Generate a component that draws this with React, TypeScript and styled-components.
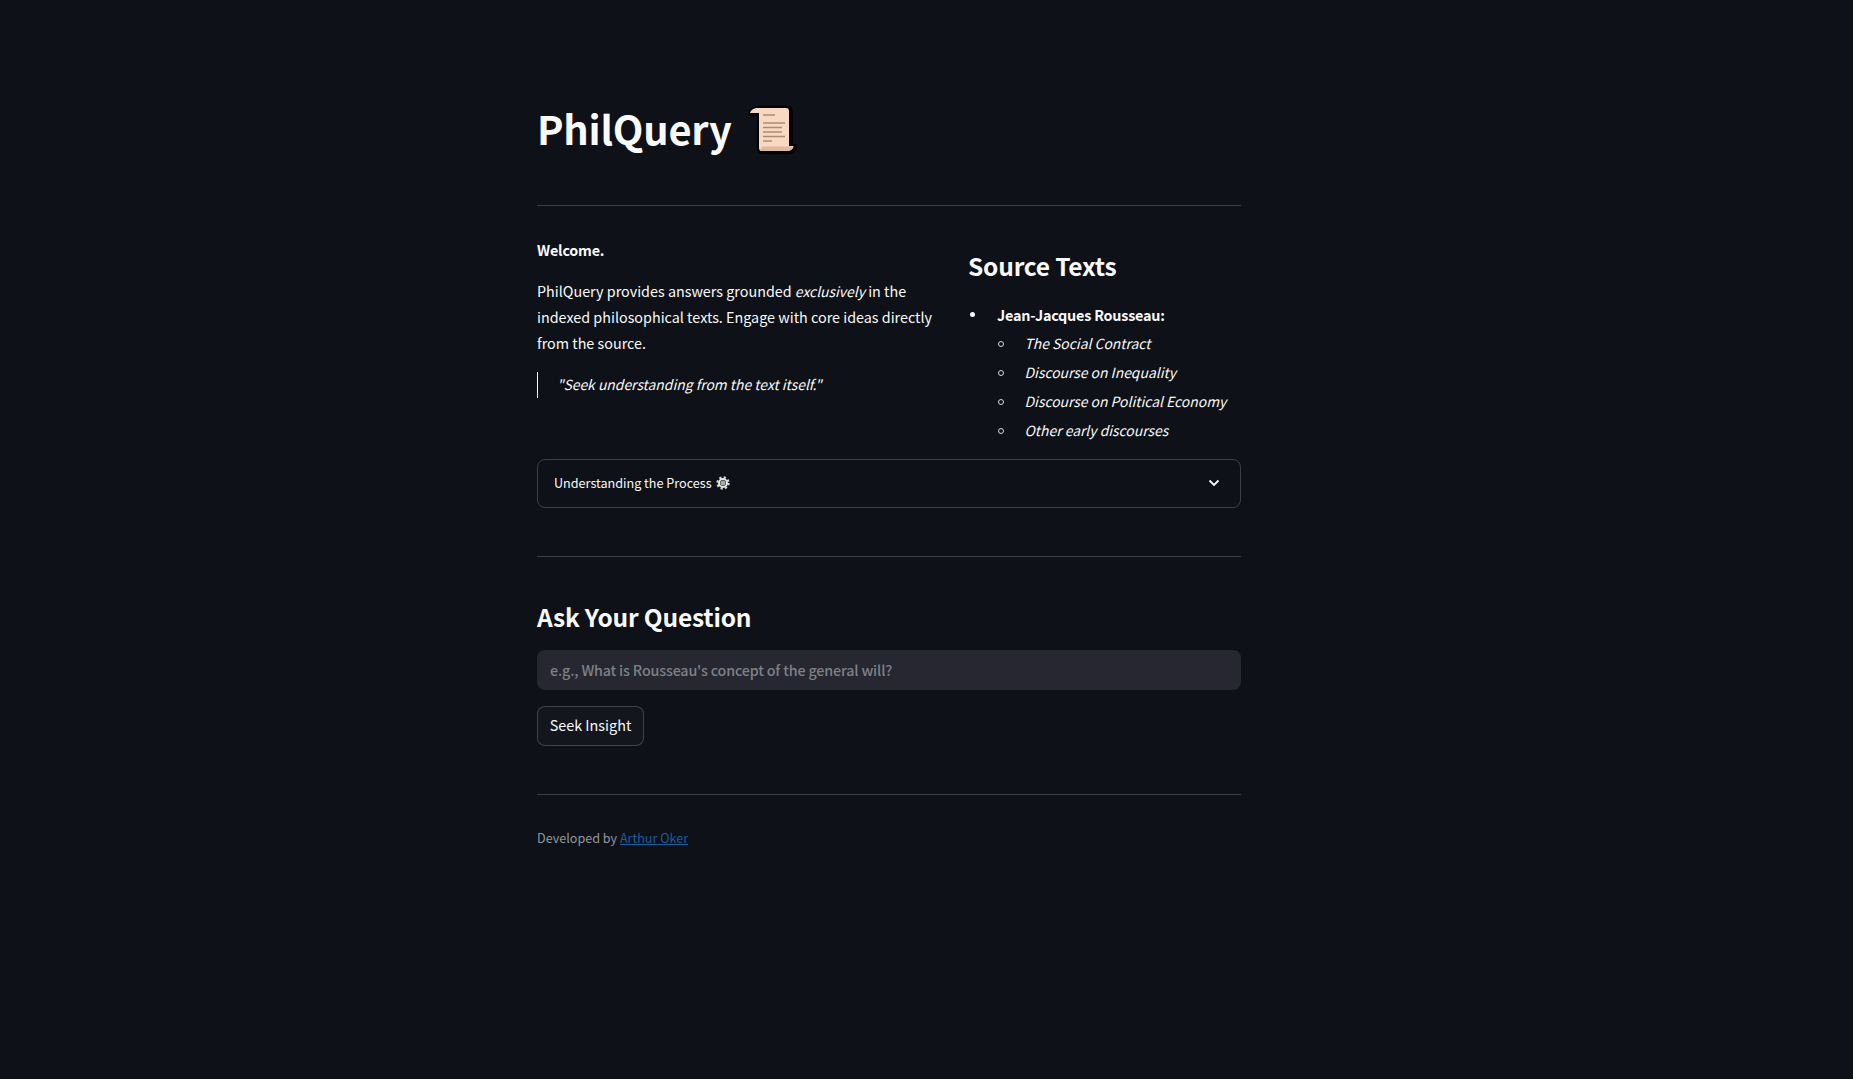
import styled, { createGlobalStyle } from "styled-components";

const GlobalStyle = createGlobalStyle`
  html, body {
    margin: 0;
    padding: 0;
    height: 100%;
    background: #0e1117;
  }
  body {
    color: #fafafa;
    font-family: "Noto Sans CJK JP", "Noto Sans", sans-serif;
    font-size: 14.35px;
    line-height: 26px;
  }
  em {
    font-size: 13.9px;
  }
  strong {
    letter-spacing: -0.2px;
  }
`;

const Page = styled.div`
  width: 704px;
  margin-left: 537px;
  padding-top: 100px;
`;

const TitleRow = styled.div`
  display: flex;
  align-items: center;
  height: 60px;
`;

const Title = styled.h1`
  margin: -5px 0 0;
  font-size: 39.8px;
  line-height: 60px;
  font-weight: 700;
  letter-spacing: -0.2px;
`;

const Divider = styled.hr<{ $top: number }>`
  border: none;
  height: 1px;
  margin: ${(props) => props.$top}px 0 0;
  background: rgba(250, 250, 250, 0.2);
`;

const Columns = styled.div`
  display: grid;
  grid-template-columns: 415px 273px;
  column-gap: 16px;
  margin-top: 31px;
`;

const Para = styled.p`
  margin: 0 0 15px;
`;

const Quote = styled.blockquote`
  margin: 16px 0 0;
  padding: 0 0 2px 19px;
  border-left: 1px solid #fafafa;
  font-size: 13.9px;
  line-height: 24px;
  font-style: italic;
`;

const SideTitle = styled.h2`
  margin: 0;
  padding-top: 9px;
  font-size: 24.5px;
  line-height: 40px;
  font-weight: 600;
  letter-spacing: -0.2px;
`;

const AuthorList = styled.ul`
  margin: 16px 0 0;
  padding-left: 29px;
  list-style: none;
`;

const AuthorItem = styled.li`
  position: relative;
  &::before {
    content: "";
    position: absolute;
    left: -27px;
    top: 10px;
    width: 5px;
    height: 5px;
    border-radius: 50%;
    background: #fafafa;
  }
`;

const BookList = styled.ul`
  margin: 0;
  padding: 1px 0 0 27.5px;
  list-style: none;
`;

const BookItem = styled.li`
  position: relative;
  height: 29px;
  line-height: 29px;
  font-size: 13.9px;
  font-style: italic;
  &::before {
    content: "";
    position: absolute;
    left: -26.5px;
    top: 12px;
    width: 4px;
    height: 4px;
    border: 1px solid #d8d8d8;
    border-radius: 50%;
  }
`;

const Expander = styled.div`
  display: flex;
  align-items: center;
  justify-content: space-between;
  height: 49px;
  box-sizing: border-box;
  margin-top: 14px;
  padding: 0 20px 2px 16px;
  border: 1px solid rgba(250, 250, 250, 0.2);
  border-radius: 8px;
`;

const ExpanderLabel = styled.div`
  display: flex;
  align-items: center;
  gap: 4px;
  font-size: 12.6px;
`;

const SectionTitle = styled.h3`
  margin: 40px 0 0;
  font-size: 24.5px;
  line-height: 40px;
  font-weight: 600;
  letter-spacing: -0.2px;
`;

const QuestionInput = styled.input`
  display: block;
  width: 100%;
  height: 40px;
  box-sizing: border-box;
  margin-top: 13px;
  padding: 0 13px 2px;
  border: none;
  border-radius: 8px;
  background: #262730;
  color: #fafafa;
  font-family: inherit;
  font-size: 14.3px;
  font-weight: 500;
  letter-spacing: -0.16px;
  &::placeholder {
    color: #7f8087;
    opacity: 1;
  }
`;

const SeekButton = styled.button`
  display: block;
  width: 107px;
  height: 40px;
  margin-top: 16px;
  padding: 0 0 3px;
  border: 1px solid rgba(250, 250, 250, 0.2);
  border-radius: 8px;
  background: #13161d;
  color: #fafafa;
  font-family: inherit;
  font-size: 14.4px;
`;

const Footer = styled.p`
  margin: 31px 0 0;
  font-size: 12.6px;
  line-height: 24px;
  color: #94979c;
`;

const FooterLink = styled.a`
  color: #1f5c99;
`;

const ScrollIcon = styled.svg`
  width: 52px;
  height: 52px;
  margin-left: 14px;
  margin-top: -3px;
`;

const GearIcon = () => (
  <svg width="14" height="14" viewBox="0 0 14 14">
    <circle cx="7" cy="7" r="5.6" fill="none" stroke="#d9d9d9" strokeWidth="2.2" strokeDasharray="2.2 2.2" />
    <circle cx="7" cy="7" r="4" fill="none" stroke="#e6e6e6" strokeWidth="2" />
    <circle cx="7" cy="7" r="2.6" fill="#a8a8a8" />
  </svg>
);

const ChevronIcon = () => (
  <svg width="12" height="8" viewBox="0 0 12 8">
    <path d="M1.5 1.5 L6 6 L10.5 1.5" fill="none" stroke="#fafafa" strokeWidth="1.8" />
  </svg>
);

const scrollShape =
  "M4 10 C5 6.5 8 5 12 5 H40 Q43 5 43 8 V43 H47.5 C47 46.5 44 48 41 48 H16 Q13 48 13 45 V10 Z";

const Scroll = () => (
  <ScrollIcon viewBox="0 0 52 52">
    <path
      d={scrollShape}
      transform="translate(1 0.5)"
      fill="#000"
      stroke="#000"
      strokeWidth="5.5"
      strokeLinejoin="round"
    />
    <path d={scrollShape} fill="#f8d8c0" />
    <path d="M14 48 C15 45 16 43.5 18 43.5 H47.5 C47 46.5 44 48 41 48 Z" fill="#dfb99c" />
    <path
      d="M17 12 H29 M17 20 H39 M17 24.5 H36 M17 29 H36 M17 33.5 H39 M17 38 H26"
      stroke="#b08a70"
      strokeWidth="1.3"
    />
  </ScrollIcon>
);

const App = () => {
  return (
    <>
      <GlobalStyle />
      <Page>
        <TitleRow>
          <Title>PhilQuery</Title>
          <Scroll />
        </TitleRow>
        <Divider $top={45} />
        <Columns>
          <div>
            <Para>
              <strong>Welcome.</strong>
            </Para>
            <Para>
              PhilQuery provides answers grounded <em>exclusively</em> in the indexed philosophical
              texts. Engage with core ideas directly from the source.
            </Para>
            <Quote>"Seek understanding from the text itself."</Quote>
          </div>
          <div>
            <SideTitle>Source Texts</SideTitle>
            <AuthorList>
              <AuthorItem>
                <strong>Jean-Jacques Rousseau:</strong>
                <BookList>
                  <BookItem>The Social Contract</BookItem>
                  <BookItem>Discourse on Inequality</BookItem>
                  <BookItem>Discourse on Political Economy</BookItem>
                  <BookItem>Other early discourses</BookItem>
                </BookList>
              </AuthorItem>
            </AuthorList>
          </div>
        </Columns>
        <Expander>
          <ExpanderLabel>
            Understanding the Process
            <GearIcon />
          </ExpanderLabel>
          <ChevronIcon />
        </Expander>
        <Divider $top={48} />
        <SectionTitle>Ask Your Question</SectionTitle>
        <QuestionInput placeholder="e.g., What is Rousseau's concept of the general will?" />
        <SeekButton>Seek Insight</SeekButton>
        <Divider $top={48} />
        <Footer>
          Developed by <FooterLink href="#">Arthur Oker</FooterLink>
        </Footer>
      </Page>
    </>
  );
};

export default App;
